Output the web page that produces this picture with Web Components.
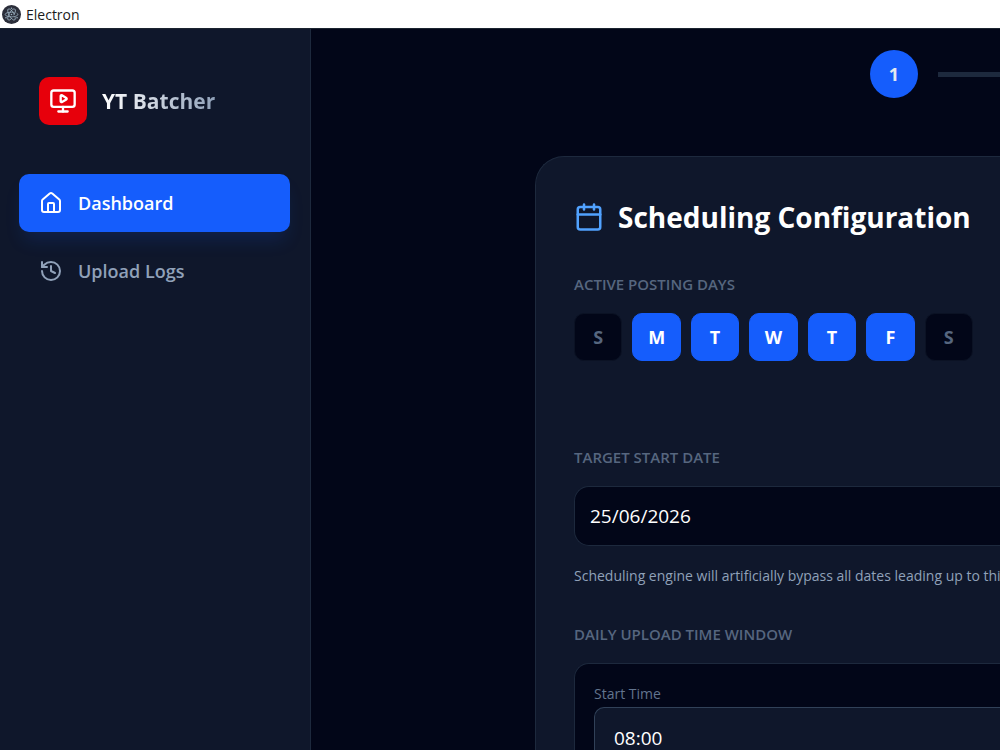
<!DOCTYPE html>
<html lang="en">
<head>
<meta charset="utf-8">
<title>Electron</title>
<style>
  html, body { height: 100%; }
  body {
    margin: 0;
    overflow: hidden;
    background: #020618;
    color: #fff;
    font-family: "Open Sans", "Noto Sans", sans-serif;
  }
</style>
</head>
<body>
<app-window>
  <side-bar slot="sidebar">
    <nav-item icon="home" active>Dashboard</nav-item>
    <nav-item icon="history">Upload Logs</nav-item>
  </side-bar>
  <step-track></step-track>
  <config-card heading="Scheduling Configuration">
    <day-picker></day-picker>
    <text-field label="Target Start Date" value="25/06/2026" hint="Scheduling engine will artificially bypass all dates leading up to this"></text-field>
    <time-window></time-window>
  </config-card>
</app-window>

<script>
const svg = (body, width = 2) =>
  `<svg viewBox="0 0 24 24" fill="none" stroke="currentColor" stroke-width="${width}" stroke-linecap="round" stroke-linejoin="round" aria-hidden="true">${body}</svg>`;

const icons = {
  home: svg('<path d="M15 21v-8a1 1 0 0 0-1-1h-4a1 1 0 0 0-1 1v8"/><path d="M3 10a2 2 0 0 1 .709-1.528l7-6a2 2 0 0 1 2.582 0l7 6A2 2 0 0 1 21 10v9a2 2 0 0 1-2 2H5a2 2 0 0 1-2-2z"/>'),
  history: svg('<path d="M3 12a9 9 0 1 0 9-9 9.75 9.75 0 0 0-6.74 2.74L3 8"/><path d="M3 3v5h5"/><path d="M12 7v5l4 2"/>'),
  calendar: svg('<path d="M8 2v4"/><path d="M16 2v4"/><rect width="18" height="18" x="3" y="4" rx="2"/><path d="M3 10h18"/>'),
  monitor: svg('<path d="M10 7.75a.75.75 0 0 1 1.142-.638l3.664 2.249a.75.75 0 0 1 0 1.278l-3.664 2.25a.75.75 0 0 1-1.142-.64z"/><path d="M12 17v4"/><path d="M8 21h8"/><rect x="2" y="3" width="20" height="14" rx="2"/>'),
  electron: `<svg viewBox="0 0 24 24" fill="none" stroke="#9fb4c4" stroke-width="1" aria-hidden="true">
    <circle cx="12" cy="12" r="12" fill="#2b2e3a" stroke="none"/>
    <ellipse cx="12" cy="12" rx="8" ry="3" stroke-dasharray="30 3"/>
    <ellipse cx="12" cy="12" rx="8" ry="3" transform="rotate(60 12 12)" stroke-dasharray="28 4"/>
    <ellipse cx="12" cy="12" rx="8" ry="3" transform="rotate(120 12 12)" stroke-dasharray="26 5"/>
    <circle cx="12" cy="12" r="1" fill="#9fb4c4" stroke="none"/>
    <circle cx="5" cy="16" r="1" fill="#9fb4c4" stroke="none"/>
    <circle cx="19" cy="16" r="1" fill="#9fb4c4" stroke="none"/>
    <circle cx="12" cy="4" r="1" fill="#9fb4c4" stroke="none"/></svg>`
};

const base = `:host, *, *::before, *::after { box-sizing: border-box; } svg { display: block; width: 100%; height: 100%; }
  button, input { font: inherit; color: inherit; }`;

class BaseElement extends HTMLElement {
  connectedCallback() {
    if (this.shadowRoot) return;
    const template = document.createElement('template');
    template.innerHTML = `<style>${base}${this.styles()}</style>${this.markup()}`;
    this.attachShadow({ mode: 'open' }).append(template.content.cloneNode(true));
  }
}

customElements.define('app-window', class extends BaseElement {
  styles() { return `
    :host { display: grid; grid-template-rows: auto minmax(0, 1fr); height: 100vh; }
    .title { display: flex; align-items: center; gap: 5px; height: 28px; padding: 0 2px; background: #fff; color: #1b1b1b; font-size: 14px; }
    .title i { width: 19px; height: 19px; }
    .body { display: flex; min-height: 0; border-top: 1px solid #1b2430; }
    main { flex: 1; min-width: 0; overflow: hidden; }
    .stage { display: flex; flex-direction: column; gap: 58px; padding: 21px 0 21px 224px; }`; }
  markup() { return `
    <header class="title"><i>${icons.electron}</i><span>Electron</span></header>
    <div class="body"><slot name="sidebar"></slot><main><div class="stage"><slot></slot></div></main></div>`; }
});

customElements.define('side-bar', class extends BaseElement {
  styles() { return `
    :host { display: block; flex: none; width: 311px; padding: 48px 20px 48px 19px; background: #0f172b; border-right: 1px solid #1d293d; }
    .brand { display: flex; align-items: center; gap: 15px; padding: 0 20px; margin-bottom: 49px; }
    .logo { width: 48px; height: 48px; padding: 10px; border-radius: 10px; background: #e7000b; }
    .name { margin: 0; font-size: 21px; line-height: 32px; font-weight: 700; color: transparent; background: linear-gradient(90deg, #fff, #90a1b9); background-clip: text; -webkit-background-clip: text; }
    nav { display: grid; gap: 10px; }`; }
  markup() { return `
    <div class="brand"><div class="logo">${icons.monitor}</div><h1 class="name">YT Batcher</h1></div>
    <nav aria-label="Main"><slot></slot></nav>`; }
});

customElements.define('nav-item', class extends BaseElement {
  styles() { return `
    :host { display: block; color: #90a1b9; }
    :host([active]) { color: #fff; }
    a { display: flex; align-items: center; gap: 15px; height: 58px; padding: 0 20px; border-radius: 10px; color: inherit; text-decoration: none; font-size: 18px; font-weight: 600; }
    :host([active]) a { background: #155dfc; box-shadow: 0 12px 18px -4px rgba(21, 93, 252, .15); }
    i { width: 24px; height: 24px; }`; }
  markup() { return `<a href="#" ${this.hasAttribute('active') ? 'aria-current="page"' : ''}><i>${icons[this.getAttribute('icon')]}</i><span><slot></slot></span></a>`; }
});

customElements.define('step-track', class extends BaseElement {
  styles() { return `
    :host { display: block; padding-left: 335px; }
    ol { display: flex; align-items: center; gap: 20px; margin: 0; padding: 0; list-style: none; }
    .dot { display: grid; place-items: center; width: 48px; height: 48px; border-radius: 50%; background: #1d293d; color: #62748e; font-size: 18px; font-weight: 700; }
    .dot.current { background: #155dfc; color: #e2e8f0; }
    .line { flex: 1; height: 5px; background: #1d293d; }`; }
  markup() { return `<ol><li class="dot current" aria-current="step">1</li><li class="line" role="presentation"></li></ol>`; }
});

customElements.define('config-card', class extends BaseElement {
  styles() { return `
    :host { display: block; padding: 38px 0 38px 38px; border: 1px solid #1d293d; border-width: 1px 0 1px 1px; border-radius: 29px 0 0 29px; background: #0f172b; }
    header { display: flex; align-items: center; gap: 14px; height: 44px; margin-bottom: 33px; }
    i { width: 30px; height: 30px; color: #51a2ff; }
    h2 { margin: 0; font-size: 28px; line-height: 44px; font-weight: 700; white-space: nowrap; }`; }
  markup() { return `<header><i>${icons.calendar}</i><h2>${this.getAttribute('heading')}</h2></header><slot></slot>`; }
});

const label = `.label { display: block; margin: 0 0 17px; padding: 0; font-size: 15px; line-height: 24px; font-weight: 600; color: #56667f; text-transform: uppercase; }`;

customElements.define('day-picker', class extends BaseElement {
  styles() { return `
    :host { display: block; margin-bottom: 84px; }
    ${label}
    .days { display: grid; grid-template-columns: repeat(7, 1fr); gap: 10px; width: 399px; }
    button { height: 48px; padding: 0; border: 1px solid #0b1224; border-radius: 10px; background: #020618; color: #56667f; font-size: 18px; font-weight: 700; }
    button[aria-pressed="true"] { border-color: #155dfc; background: #155dfc; color: #fff; }`; }
  markup() {
    const days = [['S', false], ['M', true], ['T', true], ['W', true], ['T', true], ['F', true], ['S', false]];
    return `<div class="label" id="days">Active Posting Days</div><div class="days" role="group" aria-labelledby="days">${
      days.map(([d, on]) => `<button type="button" aria-pressed="${on}">${d}</button>`).join('')}</div>`;
  }
});

customElements.define('text-field', class extends BaseElement {
  styles() { return `
    :host { display: block; margin-bottom: 34px; }
    ${label}
    input { display: block; width: 100%; height: 60px; padding: 0 15px; border: 1px solid #1d293d; border-right: 0; border-radius: 15px 0 0 15px; background: #020618; color: #fff; font-size: 19px; }
    p { margin: 18px 0 0; font-size: 14px; line-height: 24px; color: #90a1b9; white-space: nowrap; }`; }
  markup() { return `<label class="label" for="field">${this.getAttribute('label')}</label>
    <input id="field" type="text" value="${this.getAttribute('value')}"><p>${this.getAttribute('hint')}</p>`; }
});

customElements.define('time-window', class extends BaseElement {
  styles() { return `
    :host { display: block; }
    ${label}
    .box { display: grid; gap: 20px; padding: 19px 0 19px 19px; border: 1px solid #1d293d; border-width: 1px 0 1px 1px; border-radius: 15px 0 0 15px; background: #020618; }
    .box label { display: block; margin-bottom: 2px; font-size: 14px; line-height: 22px; font-weight: 500; color: #62748e; }
    input { display: block; width: 100%; height: 62px; padding: 0 19px; border: 1px solid #314158; border-right: 0; border-radius: 10px 0 0 10px; background: #0f172b; color: #fff; font-size: 19px; }`; }
  markup() { return `<div class="label" id="window">Daily Upload Time Window</div>
    <div class="box" role="group" aria-labelledby="window">
      <div><label for="start">Start Time</label><input id="start" type="text" value="08:00"></div>
    </div>`; }
});
</script>
</body>
</html>
